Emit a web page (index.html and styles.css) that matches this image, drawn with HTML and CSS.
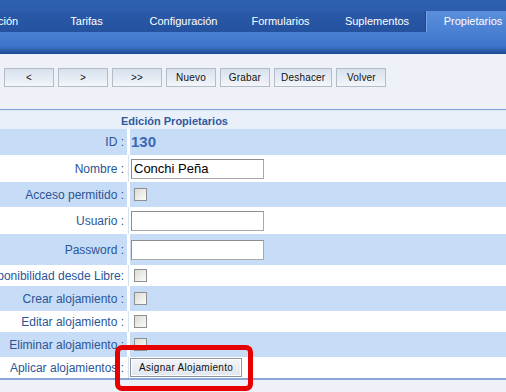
FILE: index.html
```html
<!DOCTYPE html>
<html lang="es">
<head>
  <meta charset="UTF-8" />
  <title>Edición Propietarios</title>
  <link rel="stylesheet" href="styles.css">
</head>
<body>
  <div class="page">
    <div class="nav">
      <ul class="tabs">
        <li>Facturación</li>
        <li>Tarifas</li>
        <li>Configuración</li>
        <li>Formularios</li>
        <li>Suplementos</li>
        <li class="active">Propietarios</li>
      </ul>
    </div>
    <div class="subnav"></div>

    <div class="toolbar">
      <button class="btn">&lt;</button>
      <button class="btn">&gt;</button>
      <button class="btn">&gt;&gt;</button>
      <button class="btn">Nuevo</button>
      <button class="btn">Grabar</button>
      <button class="btn">Deshacer</button>
      <button class="btn">Volver</button>
    </div>

    <div class="form">
      <div class="form-title">Edición Propietarios</div>

      <div class="row blue r26">
        <div class="label">ID :</div>
        <div class="value"><span class="id">130</span></div>
      </div>
      <div class="row r27">
        <div class="label">Nombre :</div>
        <div class="value"><input type="text" class="field" value="Conchi Peña"></div>
      </div>
      <div class="row blue r25">
        <div class="label">Acceso permitido :</div>
        <div class="value"><input type="checkbox" class="check"></div>
      </div>
      <div class="row r27">
        <div class="label">Usuario :</div>
        <div class="value"><input type="text" class="field"></div>
      </div>
      <div class="row blue r31">
        <div class="label">Password :</div>
        <div class="value"><input type="password" class="field"></div>
      </div>
      <div class="row r21">
        <div class="label">Disponibilidad desde Libre:</div>
        <div class="value"><input type="checkbox" class="check"></div>
      </div>
      <div class="row blue r25">
        <div class="label">Crear alojamiento :</div>
        <div class="value"><input type="checkbox" class="check"></div>
      </div>
      <div class="row r21">
        <div class="label">Editar alojamiento :</div>
        <div class="value"><input type="checkbox" class="check"></div>
      </div>
      <div class="row blue r25">
        <div class="label">Eliminar alojamiento :</div>
        <div class="value"><input type="checkbox" class="check"></div>
      </div>
      <div class="row r21">
        <div class="label">Aplicar alojamientos :</div>
        <div class="value"><button class="assign">Asignar Alojamiento</button></div>
      </div>
    </div>
  </div>

  <div class="highlight"></div>
</body>
</html>
```

FILE: styles.css
```css
* {
  box-sizing: border-box;
}

body {
  margin: 0;
  overflow: hidden;
  background: #eef2f8;
  font-family: "Liberation Sans", Arial, sans-serif;
}

.page {
  margin-left: -80px;
  width: 586px;
}

.nav {
  height: 32px;
  background: linear-gradient(#2f60b1, #2957a6);
}

.tabs {
  list-style: none;
  margin: 0;
  padding: 11px 0 0 21px;
  display: flex;
}

.tabs li {
  width: 97px;
  height: 21px;
  line-height: 21px;
  flex-shrink: 0;
  text-align: center;
  font-size: 11px;
  color: #fff;
  background: linear-gradient(#2a59a8, #24529f);
}

.tabs li:nth-child(5) {
  border-right: 1px solid #1d4890;
}

.tabs li.active {
  background: linear-gradient(#5a8fdc, #4a80d3);
  border-left: 1px solid #7aa6e6;
  text-indent: -4px;
}

.subnav {
  height: 22px;
  background: linear-gradient(#4a81d5 0%, #3d74ca 65%, #2c5ca8 85%, #1e4890 100%);
}

.toolbar {
  height: 56px;
  padding: 14px 0 0 84px;
  display: flex;
  gap: 4px;
  align-items: flex-start;
  border-bottom: 1px solid #7ea1d6;
}

.btn {
  min-width: 50px;
  height: 19px;
  padding: 0 6px;
  font-family: "Liberation Sans", Arial, sans-serif;
  font-size: 10px;
  letter-spacing: 0.2px;
  color: #111;
  background: linear-gradient(#d6e0ee, #f3f6fa);
  border: 1px solid #b4bcc7;
}

.form {
  background: #fff;
  border-bottom: 2px solid #88a7d6;
}

.form-title {
  height: 19px;
  line-height: 20px;
  padding-left: 201px;
  font-size: 11px;
  font-weight: bold;
  color: #2f5a9e;
  background: #eaf0f9;
  border-top: 1px solid #dfe8f5;
}

.row {
  display: grid;
  grid-template-columns: 207px 1fr;
  column-gap: 3px;
  align-items: stretch;
}

.r21 { height: 21px; }
.r25 { height: 25px; }
.r26 { height: 26px; }
.r27 { height: 27px; }
.r31 { height: 31px; }

.label {
  display: flex;
  align-items: center;
  justify-content: flex-end;
  padding-right: 3px;
  font-size: 12px;
  color: #2b5597;
  white-space: nowrap;
}

.value {
  display: flex;
  align-items: center;
  padding-left: 1px;
}

.row:not(.blue) .value {
  border-left: 1px solid #d7e2f0;
  margin-left: -2px;
  padding-left: 2px;
}

.row.blue .label,
.row.blue .value {
  background: #c7dcf6;
}

.id {
  font-size: 15px;
  font-weight: bold;
  color: #3a69b4;
  margin-top: -1px;
}

.field {
  width: 133px;
  height: 20px;
  margin: 0;
  padding: 0 2px;
  font-family: "Liberation Sans", Arial, sans-serif;
  font-size: 13px;
  color: #000;
  background: #fff;
  border: 1px solid #a9a9a9;
  border-top-color: #8d8d8d;
  border-left-color: #8d8d8d;
}

.check {
  appearance: none;
  width: 13px;
  height: 13px;
  margin: 0 0 0 3px;
  border: 1px solid #8f8f8f;
  background: linear-gradient(135deg, #dcdcd6, #fbfbf9);
}

.assign {
  height: 19px;
  margin-left: -1px;
  padding: 0 8px;
  font-family: "Liberation Sans", Arial, sans-serif;
  font-size: 10px;
  letter-spacing: 0.3px;
  color: #111;
  background: linear-gradient(#f2f5f9, #e1e7ef);
  border: 1px solid #8c939c;
  box-shadow: inset 0 0 0 1px #fff;
}

.highlight {
  position: absolute;
  left: 115px;
  top: 345px;
  width: 138px;
  height: 46px;
  border: 5px solid #e60000;
  border-radius: 7px;
}
```
